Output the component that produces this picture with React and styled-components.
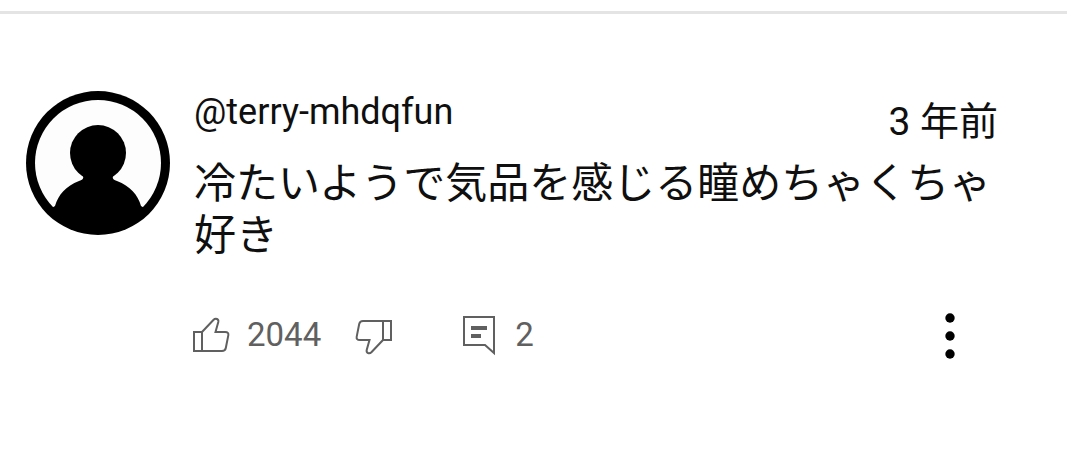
import React from "react";
import styled, { createGlobalStyle } from "styled-components";

const GlobalStyle = createGlobalStyle`
  *, *::before, *::after { box-sizing: border-box; }
  body {
    margin: 0;
    background: #fff;
    color: #0f0f0f;
    font-family: Roboto, "Noto Sans CJK JP", sans-serif;
  }
`;

const Page = styled.main`
  padding-top: 11px;
`;

const Comment = styled.article`
  display: flex;
  align-items: flex-start;
  gap: 24px;
  padding: 77px 69px 0 26px;
  border-top: 3px solid #e4e4e4;
`;

const Avatar = styled.svg`
  flex: none;
  width: 144px;
  height: 144px;
`;

const Content = styled.div`
  flex: 1;
  min-width: 0;
`;

const Header = styled.header`
  display: flex;
  align-items: flex-start;
  justify-content: space-between;
  padding-top: 1px;
`;

const Author = styled.a`
  color: #0f0f0f;
  font-size: 36px;
  line-height: 40px;
  text-decoration: none;
`;

const Time = styled.time`
  color: #0f0f0f;
  font-size: 39px;
  line-height: 60px;
`;

const Text = styled.p`
  margin: 6px 0 0;
  font-size: 42px;
  line-height: 52px;
`;

const Actions = styled.div`
  display: flex;
  align-items: center;
  height: 48px;
  margin: 50px 0 0 -1px;
`;

const Action = styled.button`
  display: flex;
  align-items: center;
  gap: 16px;
  margin: 0 ${(p) => p.$after || 0}px 0 0;
  padding: 0;
  border: 0;
  background: none;
  color: #606060;
  font: inherit;
  font-size: 33px;
  line-height: 44px;
  cursor: pointer;
`;

const Count = styled.span`
  margin-top: -2px;
`;

const MoreButton = styled(Action)`
  margin-left: auto;
  margin-right: 41px;
  color: #000;
`;

const Icon = styled.svg`
  display: block;
  flex: none;
  fill: none;
  stroke: currentColor;
  stroke-width: 2;
`;

const Thumb = ({ down }) => (
  <Icon width="38" height="40" viewBox="0 0 38 40" aria-hidden="true">
    <g transform={down ? "rotate(180 18.5 20)" : undefined}>
      <path d="M1 16H9V35H1Z" />
      <path d="M9 16 20.6 3.800Q22.200 2.200 24 3Q25.800 3.900 25.300 6L22.500 16H32.200Q36 16 35.300 19.400L32.800 32Q32.200 35 29 35H9" />
    </g>
  </Icon>
);

export default function App() {
  return (
    <>
      <GlobalStyle />
      <Page>
        <Comment>
          <Avatar viewBox="0 0 144 144" role="img" aria-label="@terry-mhdqfun">
            <circle cx="72" cy="72" r="72" />
            <circle cx="72" cy="72" r="63" fill="#fdfdfd" />
            <circle cx="72" cy="62" r="28" />
            <path d="M54 80C58 86 59 88 53 90C40 95 32 104 29 115L24 118L40 134Q72 147 104 134L120 118L115 115C112 104 104 95 91 90C85 88 86 86 90 80Z" />
          </Avatar>
          <Content>
            <Header>
              <Author href="#channel">@terry-mhdqfun</Author>
              <Time>3 年前</Time>
            </Header>
            <Text>冷たいようで気品を感じる瞳めちゃくちゃ好き</Text>
            <Actions>
              <Action type="button" aria-label="高評価 2044" $after={34}>
                <Thumb />
                <Count>2044</Count>
              </Action>
              <Action type="button" aria-label="低評価" $after={69}>
                <Thumb down />
              </Action>
              <Action type="button" aria-label="返信 2">
                <Icon width="37" height="40" viewBox="0 0 37 40" aria-hidden="true">
                  <path d="M2 1H32V37L23 29H2Z" />
                  <path d="M9 12H25M9 20H19" strokeWidth="4" />
                </Icon>
                <Count>2</Count>
              </Action>
              <MoreButton type="button" aria-label="その他の操作">
                <svg width="14" height="48" viewBox="0 0 14 48" fill="currentColor" aria-hidden="true">
                  <circle cx="7" cy="6" r="4.700" />
                  <circle cx="7" cy="24" r="4.700" />
                  <circle cx="7" cy="42" r="4.700" />
                </svg>
              </MoreButton>
            </Actions>
          </Content>
        </Comment>
      </Page>
    </>
  );
}
